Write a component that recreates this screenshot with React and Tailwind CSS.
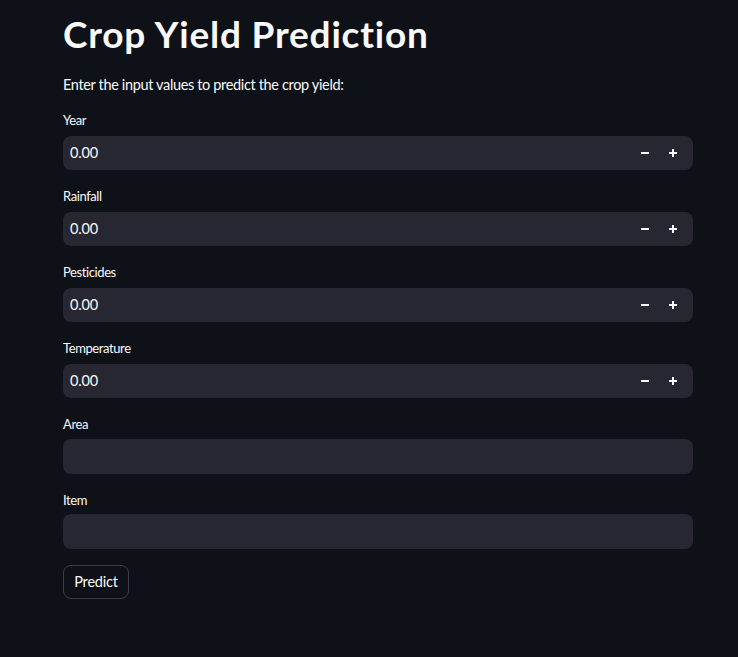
import React from 'react';

const numberFields = ['Year', 'Rainfall', 'Pesticides', 'Temperature'];
const textFields = ['Area', 'Item'];

function Minus() {
  return (
    <svg width="8" height="8" viewBox="0 0 8 8" className="block">
      <rect x="0" y="3" width="8" height="2" fill="#fafafa" />
    </svg>
  );
}

function Plus() {
  return (
    <svg width="8" height="8" viewBox="0 0 8 8" className="block">
      <rect x="0" y="3" width="8" height="2" fill="#fafafa" />
      <rect x="3" y="0" width="2" height="8" fill="#fafafa" />
    </svg>
  );
}

export default function App() {
  return (
    <div className="min-h-[657px] w-full bg-[#0e1117] text-[#fafafa] font-['Lato','Noto_Sans',sans-serif]">
      <div className="ml-[63px] w-[630px] pt-[10px] pb-10 flex flex-col">
        <h1 className="text-[37px] font-bold leading-[48px] tracking-[0.8px] mb-[15px]">Crop Yield Prediction</h1>
        <p className="text-[14.5px] leading-6 tracking-[-0.35px] mb-[13px]">Enter the input values to predict the crop yield:</p>

        <div className="flex flex-col gap-4">
          {numberFields.map((label) => (
            <div key={label} className="flex flex-col">
              <label className="h-[26px] text-[13px] leading-5 tracking-[-0.4px]">{label}</label>
              <div className="h-[34px] rounded-lg bg-[#262730] flex items-center pl-[7px] pr-[6px]">
                <span className="flex-1 text-[14.5px] tracking-[-0.2px]">0.00</span>
                <button className="w-7 h-full flex items-center justify-center"><Minus /></button>
                <button className="w-7 h-full flex items-center justify-center"><Plus /></button>
              </div>
            </div>
          ))}
          {textFields.map((label) => (
            <div key={label} className="flex flex-col">
              <label className="h-[24.5px] text-[13px] leading-5 tracking-[-0.4px]">{label}</label>
              <div className="h-[35px] rounded-lg bg-[#262730]" />
            </div>
          ))}
          <div>
            <button className="h-[34px] w-[66px] rounded-lg border border-[#3b3d47] bg-[#0e1117] text-[14.5px] tracking-[-0.2px]">Predict</button>
          </div>
        </div>
      </div>
    </div>
  );
}
